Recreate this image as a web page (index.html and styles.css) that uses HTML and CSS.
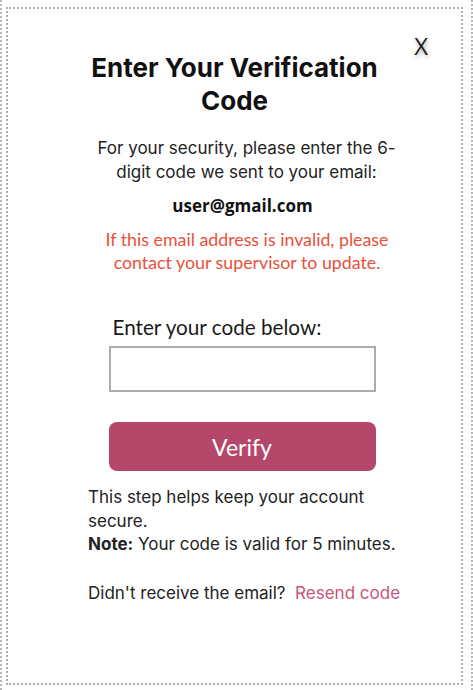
FILE: index.html
```html
<!DOCTYPE html>
<html>
<head>
<meta charset="utf-8">
<link rel="stylesheet" href="styles.css">
</head>
<body>
<div class="frame">
  <div class="dialog">
    <button class="close">X</button>
    <h1 class="title">Enter Your Verification Code</h1>
    <p class="intro">For your security, please enter the 6-digit code we sent to your email:</p>
    <p class="email">user@gmail.com</p>
    <p class="warn">If this email address is invalid, please contact your supervisor to update.</p>
    <div class="form">
      <label class="label" for="code">Enter your code below:</label>
      <input class="code" id="code" type="text">
      <button class="verify">Verify</button>
    </div>
    <div class="notes">
      <p class="note">This step helps keep your account secure.<br><b>Note:</b> Your code is valid for 5 minutes.</p>
      <p class="resend">Didn't receive the email?&nbsp; <a class="link" href="#">Resend code</a></p>
    </div>
  </div>
</div>
</body>
</html>
```
FILE: styles.css
```css
html, body {
  margin: 0;
  padding: 0;
  background: #fff;
}
.frame {
  width: 473px;
  height: 690px;
  box-sizing: border-box;
  border-left: 2px dotted #b8b8b8;
  border-right: 2px dotted #b8b8b8;
  padding: 7px 8px 5px 4px;
}
.dialog {
  position: relative;
  height: 678px;
  box-sizing: border-box;
  border: 2px dotted #b0b0b0;
  display: flex;
  flex-direction: column;
  align-items: center;
  padding-top: 42px;
  font-family: Inter, "Noto Sans", sans-serif;
  color: #222;
}
.close {
  position: absolute;
  top: 22px;
  right: 33px;
  border: none;
  background: transparent;
  font-family: "Open Sans", sans-serif;
  font-size: 24px;
  line-height: 30px;
  color: #222;
  padding: 0;
  text-shadow: 1px 2px 4px rgba(0,0,0,0.35);
  cursor: pointer;
}
.title {
  margin: 0;
  width: 320px;
  text-align: center;
  font-size: 26px;
  font-weight: 700;
  line-height: 33px;
  color: #111;
}
.intro {
  margin: 19px 0 0 24px;
  width: 320px;
  text-align: center;
  font-size: 17px;
  line-height: 24px;
}
.email {
  margin: 11px 0 0 16px;
  font-family: "Open Sans", sans-serif;
  font-weight: 700;
  font-size: 17px;
  line-height: 22px;
  color: #111;
}
.warn {
  margin: 10.5px 0 0 25px;
  width: 320px;
  text-align: center;
  font-family: Lato, sans-serif;
  font-size: 17.8px;
  line-height: 23px;
  color: #e8503a;
}
.form {
  margin: 40.5px 0 0 15px;
  width: 267px;
  display: flex;
  flex-direction: column;
}
.label {
  font-family: Lato, sans-serif;
  font-size: 20.7px;
  line-height: 26px;
  padding-left: 4px;
  color: #1a1a1a;
}
.code {
  margin-top: 6px;
  height: 46px;
  box-sizing: border-box;
  border: 2px solid #acacac;
  background: #fff;
  outline: none;
}
.verify {
  margin-top: 30px;
  height: 49px;
  border: none;
  border-radius: 8px;
  background: #b5486a;
  color: #fff;
  font-family: Lato, sans-serif;
  font-size: 23px;
}
.notes {
  align-self: flex-start;
  margin: 15px 0 0 80px;
  width: 325px;
}
.note {
  margin: 0;
  font-size: 17px;
  line-height: 23.5px;
}
.resend {
  margin: 25px 0 0;
  font-size: 17px;
  line-height: 23px;
  white-space: nowrap;
}
.link {
  color: #c8557a;
  text-decoration: none;
}
```
